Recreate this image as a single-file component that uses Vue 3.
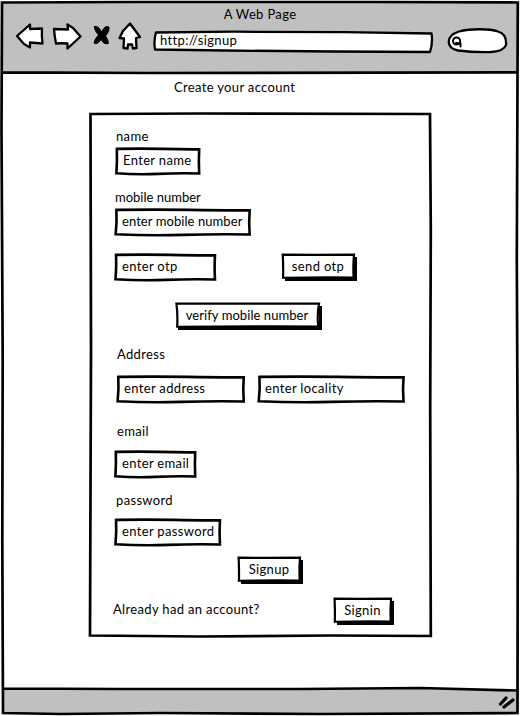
<script setup>
const inputPath = 'M1 3.5 Q30 1.5 55 3.5 T99 5 Q98.3 50 99 98 Q75 96 50 99.5 T.5 97 Q1.5 50 1 3.5 Z'
const buttonPath = 'M1 3 Q40 4 100 3 Q98.5 50 99.5 98 Q50 97 1.5 99 Q2 50 1 3 Z'
</script>

<template>
  <main class="browser">
    <svg class="frame" viewBox="0 0 520 716" aria-hidden="true">
      <path class="gray" d="M3 2H518L517 73L300 72.5L3 72.5Z M3 688.5L420 688L517 690.5V713H3Z" />
      <path class="line" d="M2 2.5L130 2L380 2L517.8 2.5L516.8 260L517.8 480L517.5 713L320 714L160 713L60 714L3 713L2.3 540L2.7 360L1.5 130Z M3 72.3L150 73L517 72.3 M3 688.5L120 689L300 689L420 688L517 690.5" />
      <path class="line" d="M90.5 114L200 113.5L430 114L430.8 230L430.2 410L430.8 636L330 635.5L200 636.5L90 635.5L91 350Z" />
    </svg>

    <header class="chrome">
      <h1 class="title">A Web Page</h1>
      <div class="toolbar">
        <svg class="nav-icons" viewBox="0 0 126 30" aria-hidden="true">
          <path d="M2 15L15 3.5V8L27 7.5Q26.5 15 27.5 22.5L15 21.5V26.5L9 23Z" />
          <path d="M39 8L53 8.5L52.5 3.5L58 7L65.5 15.5L52.5 27.5V22.5Q46 22 41 22.5Q39.5 15 39 8Z" />
          <path class="solid" d="M79.5 5.5Q83 4 86.5 11Q90 4 94 6Q95 10 90.5 15Q95 22 92.5 23Q88.5 23.5 86 18.5Q82 24.5 79 22Q79.5 18 83.5 14Q78.5 8 79.5 5.5Z" />
          <path d="M115 2.5L125 16L121 17L121.5 27L118 27.5L117 23.5H113L112.5 27.5L108.5 27L109 17.5L104.5 17L108 10Z" />
        </svg>
        <div class="address-bar">
          <svg class="outline" viewBox="0 0 280 22" preserveAspectRatio="none" aria-hidden="true">
            <path d="M2 1.5L80 .7L190 1.2L277.5 2.5Q279 12 276 21L180 20.5L70 19.5L1 18.5Q-.5 9 2 1.5Z" />
          </svg>
          <span>http://signup</span>
        </div>
        <svg class="search" viewBox="0 0 61 26" aria-hidden="true">
          <path d="M12 3.5C23 .5 43 .5 51 3.5Q60 6 59 17Q57 23 44 24Q27 24.5 11 22.5C-1 20 -2 8 12 3.5Z" />
          <circle class="glass" cx="9.6" cy="13" r="3.6" />
          <path class="glass" d="M9 15L13.5 15.5L13.5 18.5" />
        </svg>
      </div>
    </header>

    <h2 class="heading">Create your account</h2>

    <form class="form" @submit.prevent>
      <label class="label name-label">name</label>
      <div class="box name">
        <svg class="outline" viewBox="0 0 100 100" preserveAspectRatio="none"><path :d="inputPath" /></svg>
        <span>Enter name</span>
      </div>

      <label class="label mobile-label tight">mobile number</label>
      <div class="box mobile tight">
        <svg class="outline" viewBox="0 0 100 100" preserveAspectRatio="none"><path :d="inputPath" /></svg>
        <span>enter mobile number</span>
      </div>

      <div class="row otp-row">
        <div class="box otp">
          <svg class="outline" viewBox="0 0 100 100" preserveAspectRatio="none"><path :d="inputPath" /></svg>
          <span>enter otp</span>
        </div>
        <button class="btn send">
          <svg class="outline" viewBox="0 0 100 100" preserveAspectRatio="none"><path :d="buttonPath" /></svg>
          <span>send otp</span>
        </button>
      </div>

      <button class="btn verify tight">
        <svg class="outline" viewBox="0 0 100 100" preserveAspectRatio="none"><path :d="buttonPath" /></svg>
        <span>verify mobile number</span>
      </button>

      <label class="label address-label">Address</label>
      <div class="row address-row">
        <div class="box address">
          <svg class="outline" viewBox="0 0 100 100" preserveAspectRatio="none"><path :d="inputPath" /></svg>
          <span>enter address</span>
        </div>
        <div class="box locality">
          <svg class="outline" viewBox="0 0 100 100" preserveAspectRatio="none"><path :d="inputPath" /></svg>
          <span>enter locality</span>
        </div>
      </div>

      <label class="label email-label">email</label>
      <div class="box email">
        <svg class="outline" viewBox="0 0 100 100" preserveAspectRatio="none"><path :d="inputPath" /></svg>
        <span>enter email</span>
      </div>

      <label class="label password-label">password</label>
      <div class="box password">
        <svg class="outline" viewBox="0 0 100 100" preserveAspectRatio="none"><path :d="inputPath" /></svg>
        <span>enter password</span>
      </div>

      <button class="btn signup">
        <svg class="outline" viewBox="0 0 100 100" preserveAspectRatio="none"><path :d="buttonPath" /></svg>
        <span>Signup</span>
      </button>

      <div class="row signin-row">
        <p class="label">Already had an account?</p>
        <button class="btn signin">
          <svg class="outline" viewBox="0 0 100 100" preserveAspectRatio="none"><path :d="buttonPath" /></svg>
          <span>Signin</span>
        </button>
      </div>
    </form>

    <footer class="status">
      <svg class="grip" viewBox="0 0 18 14" aria-hidden="true">
        <path d="M2.5 9L8 3 M6 12L15 5" />
      </svg>
    </footer>
  </main>
</template>

<style>
body { margin: 0; background: #fff; overflow: hidden; }
</style>

<style scoped>
* { box-sizing: border-box; }
.browser {
  position: relative;
  display: flex;
  flex-direction: column;
  width: 520px;
  height: 716px;
  font: 13px/18px Lato, "Liberation Sans", sans-serif;
  letter-spacing: 0.34px;
  color: #000;
  white-space: nowrap;
}
h1, h2, p { margin: 0; font: inherit; }
svg { display: block; fill: #fff; stroke: #000; stroke-width: 2.3; stroke-linejoin: round; stroke-linecap: round; }
.frame { position: absolute; inset: 0; width: 520px; height: 716px; }
.frame path { fill: none; stroke-width: 2.7; stroke-linejoin: miter; }
.frame .gray { fill: #c0c0c0; stroke: none; }
.chrome { position: relative; height: 74px; padding-top: 5px; }
.title { width: 520px; text-align: center; }
.toolbar { display: flex; padding-left: 15px; }
.nav-icons { width: 126px; height: 30px; margin-top: -2px; }
.solid { fill: #000; stroke-width: 1; }
.address-bar { position: relative; width: 280px; height: 22px; margin: 8px 0 0 13px; padding: 0 6px; line-height: 19px; }
.search { width: 61px; height: 26px; margin: 5px 0 0 13px; }
.glass { fill: none; stroke-width: 2; }
.heading { position: relative; padding-left: 174px; margin-top: 4px; }
.form { position: relative; display: flex; flex-direction: column; align-items: flex-start; margin: 16px 89px 0; height: 525px; padding: 15px 0 0 26px; }
.label { display: block; height: 18px; line-height: 18px; }
.box, .btn { position: relative; flex: none; height: 26px; font: inherit; letter-spacing: inherit; color: inherit; border: 0; }
.box { padding-left: 7px; line-height: 25px; }
.outline { position: absolute; inset: 0; width: 100%; height: 100%; overflow: visible; }
.outline path { vector-effect: non-scaling-stroke; }
.box .outline path { stroke-width: 2.6; stroke-linejoin: miter; }
.box span, .btn span, .address-bar span { position: relative; }
.btn { height: 24px; padding: 0; background: #fff; box-shadow: 3px 3px #000; line-height: 23px; text-align: center; }
.btn .outline path { stroke-width: 2.2; stroke-linejoin: miter; }
.box.tight, .btn.tight { letter-spacing: 0.07px; }
.label.tight { letter-spacing: 0; }
.row { display: flex; }
.name-label { margin-left: 1px; }
.name { width: 84px; margin: 3px 0 0 1px; }
.mobile-label { margin-top: 14px; }
.mobile { width: 136px; margin-top: 3px; }
.otp-row { margin-top: 19px; }
.otp { width: 101px; }
.send { width: 72px; margin-left: 66px; }
.verify { width: 144px; margin: 23px 0 0 60px; }
.address-label { margin: 18px 0 0 2px; }
.address-row { margin: 13px 0 0 2px; }
.address { width: 128px; }
.locality { width: 147px; margin-left: 13px; }
.email-label { margin: 20px 0 0 2px; }
.email { width: 81px; margin-top: 11px; }
.password-label { margin: 14px 0 0 1px; }
.password { width: 106px; margin-top: 10px; }
.signup { width: 62px; margin: 12px 0 0 123px; }
.signin-row { margin: 17px 0 0 -2px; }
.signin-row .label { width: 221px; padding-top: 2px; }
.signin { width: 57px; }
.status { position: relative; display: flex; justify-content: flex-end; align-items: center; height: 24px; margin-top: auto; padding-right: 4px; }
.grip { width: 18px; height: 14px; margin-bottom: 4px; }
.grip path { stroke-width: 3.2; }
</style>
